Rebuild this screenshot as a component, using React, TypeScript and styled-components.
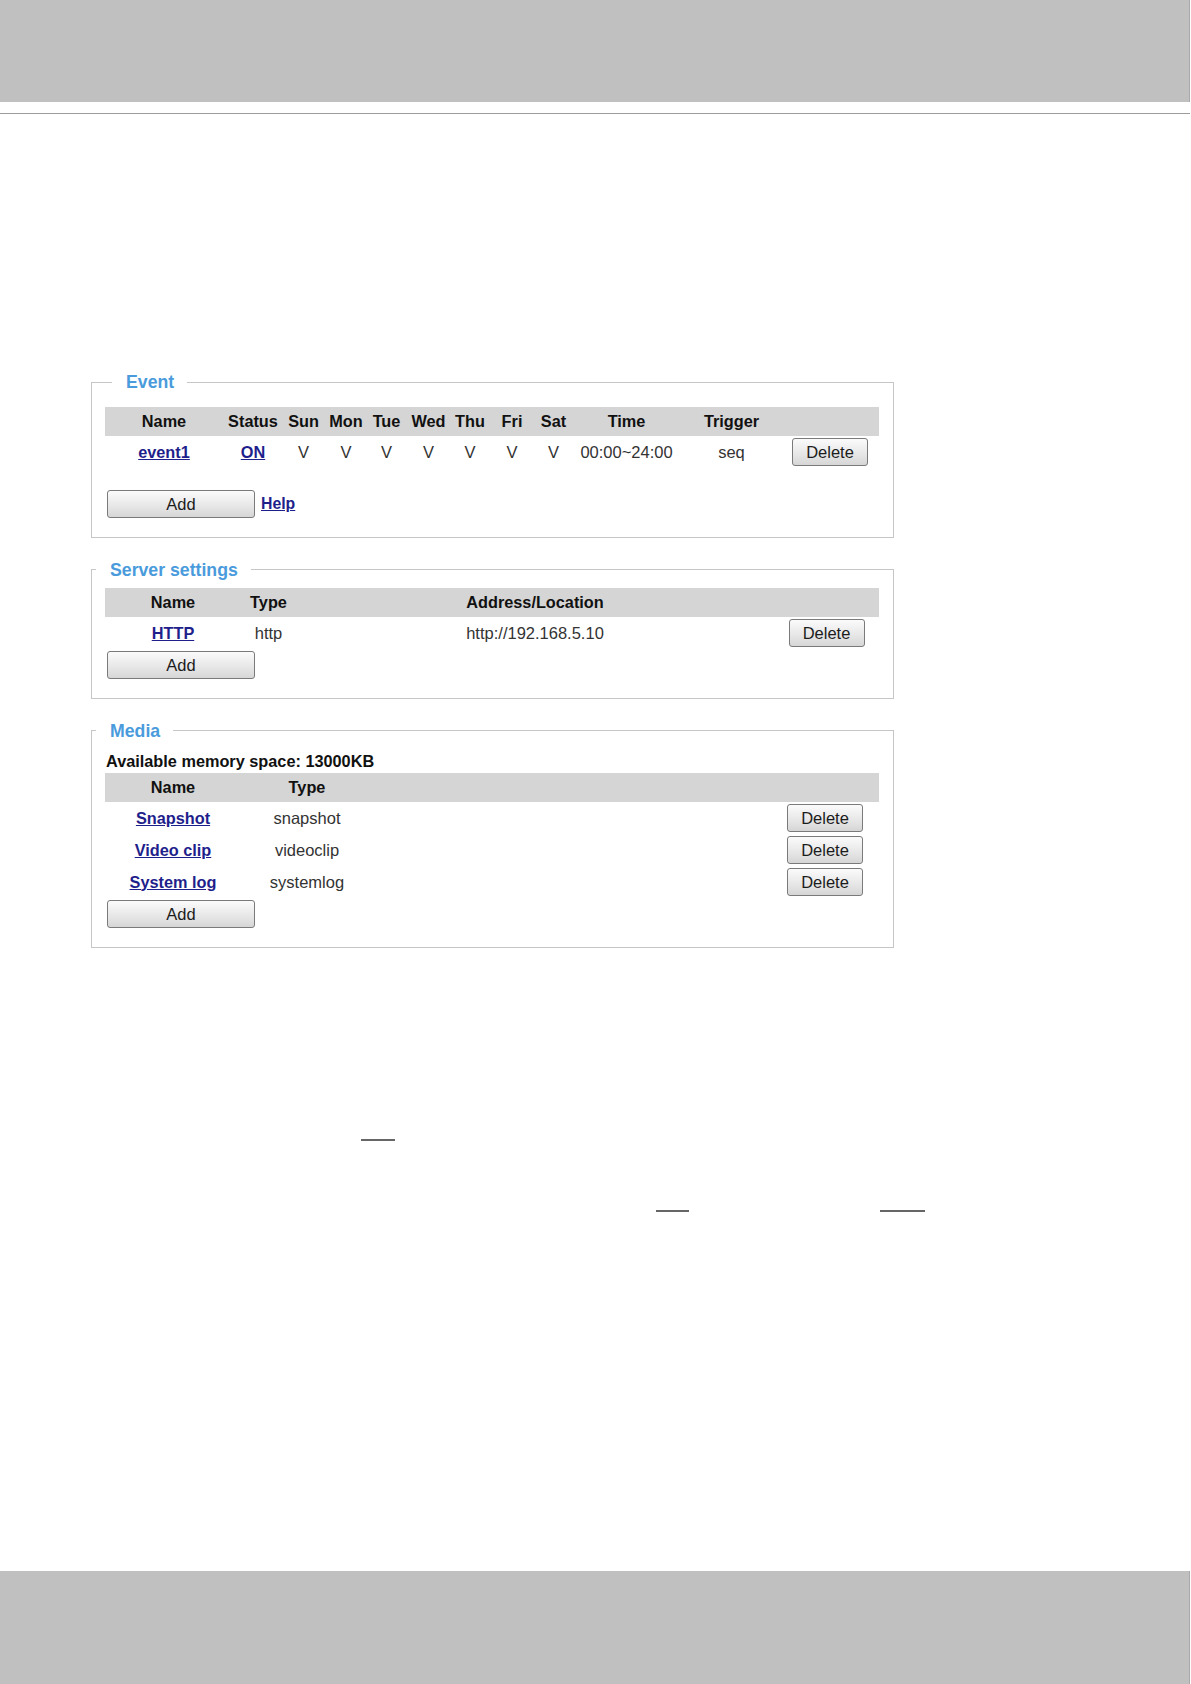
import styled, { createGlobalStyle } from "styled-components";

const GlobalStyle = createGlobalStyle`
  html, body {
    margin: 0;
    padding: 0;
    background: #fff;
  }
  body {
    font-family: "Liberation Sans", Arial, sans-serif;
  }
`;

const Page = styled.div`
  display: flex;
  flex-direction: column;
  min-height: 1684px;
  width: 1191px;
`;

const Band = styled.div`
  height: ${(p: { $h: number }) => p.$h}px;
  width: 1190px;
  box-sizing: border-box;
  background: #c0c0c0;
  border-right: 1px solid #a9a9a9;
  flex-shrink: 0;
`;

const Rule = styled.div`
  margin-top: 11px;
  height: 1px;
  width: 1190px;
  background: #9c9c9c;
`;

const Main = styled.main`
  flex: 1;
  padding-top: 258px;
`;

const Sections = styled.div`
  display: flex;
  flex-direction: column;
  gap: 22px;
  padding-left: 91px;
`;

const Fieldset = styled.fieldset`
  width: 803px;
  box-sizing: border-box;
  margin: 0;
  padding: 0;
  min-width: 0;
  border: 1px solid #c6c6c6;
`;

const Legend = styled.legend<{ $offset: number }>`
  margin-left: ${(p) => p.$offset}px;
  padding: 0 13px 0 14px;
  font-size: 17.7px;
  line-height: 20px;
  font-weight: bold;
  color: #4a9bdc;
`;

const Inner = styled.div<{ $top: number }>`
  padding: ${(p) => p.$top}px 14px 16.5px 13px;
`;

const Row = styled.div<{ $cols: string; $head?: boolean }>`
  display: grid;
  grid-template-columns: ${(p) => p.$cols};
  height: ${(p) => (p.$head ? 29 : 32)}px;
  align-items: center;
  background: ${(p) => (p.$head ? "#d5d5d5" : "transparent")};
`;

const HeadCell = styled.div`
  text-align: center;
  font-size: 16.3px;
  font-weight: bold;
  color: #111;
  white-space: nowrap;
`;

const Cell = styled.div`
  text-align: center;
  font-size: 16.5px;
  color: #333;
  white-space: nowrap;
`;

const LinkCell = styled.a`
  justify-self: center;
  font-size: 16.3px;
  font-weight: bold;
  color: #1f1f8c;
  text-decoration: underline;
  white-space: nowrap;
  cursor: pointer;
`;

const ButtonCell = styled.div`
  display: flex;
  justify-content: center;
`;

const Button = styled.button<{ $w: number }>`
  width: ${(p) => p.$w}px;
  height: 28px;
  padding: 0;
  border: 1px solid #7a7a7a;
  border-radius: 3px;
  background: linear-gradient(#fbfbfb, #e6e6e6 60%, #d6d6d6);
  font-family: "Liberation Sans", Arial, sans-serif;
  font-size: 16.5px;
  color: #1c1c1c;
  cursor: pointer;
`;

const Spacer = styled.div<{ $h: number }>`
  height: ${(p) => p.$h}px;
`;

const ActionRow = styled.div`
  display: flex;
  align-items: center;
  height: 32px;
  padding-left: 2px;
  gap: 6px;
`;

const Help = styled.a`
  font-size: 15.8px;
  font-weight: bold;
  color: #1f1f8c;
  text-decoration: underline;
  cursor: pointer;
`;

const Memo = styled.div`
  padding-left: 1px;
  font-size: 16.3px;
  line-height: 20px;
  font-weight: bold;
  color: #111;
  margin-bottom: 2px;
`;

const Notes = styled.div`
  display: flex;
  flex-direction: column;
  gap: 69px;
  margin-top: 191px;
`;

const NoteRow = styled.div`
  display: flex;
  height: 2px;
`;

const Blank = styled.span<{ $left: number; $w: number }>`
  margin-left: ${(p) => p.$left}px;
  width: ${(p) => p.$w}px;
  height: 2px;
  background: #666;
`;

const eventCols = "118px 60px 41px 44px 37px 47px 36px 48px 35px 111px 99px 98px";
const serverCols = "136px 55px 478px 105px";
const mediaCols = "136px 132px 398px 108px";

const days = ["Sun", "Mon", "Tue", "Wed", "Thu", "Fri", "Sat"];

const media = [
  { name: "Snapshot", type: "snapshot" },
  { name: "Video clip", type: "videoclip" },
  { name: "System log", type: "systemlog" },
];

export default function App() {
  return (
    <>
      <GlobalStyle />
      <Page>
        <Band $h={102} />
        <Rule />
        <Main>
          <Sections>
            <Fieldset>
              <Legend $offset={20}>Event</Legend>
              <Inner $top={15}>
                <Row $cols={eventCols} $head>
                  <HeadCell>Name</HeadCell>
                  <HeadCell>Status</HeadCell>
                  {days.map((d) => (
                    <HeadCell key={d}>{d}</HeadCell>
                  ))}
                  <HeadCell>Time</HeadCell>
                  <HeadCell>Trigger</HeadCell>
                  <div />
                </Row>
                <Row $cols={eventCols}>
                  <LinkCell>event1</LinkCell>
                  <LinkCell>ON</LinkCell>
                  {days.map((d) => (
                    <Cell key={d}>V</Cell>
                  ))}
                  <Cell>00:00~24:00</Cell>
                  <Cell>seq</Cell>
                  <ButtonCell>
                    <Button $w={76}>Delete</Button>
                  </ButtonCell>
                </Row>
                <Spacer $h={20} />
                <ActionRow>
                  <Button $w={148}>Add</Button>
                  <Help>Help</Help>
                </ActionRow>
              </Inner>
            </Fieldset>

            <Fieldset>
              <Legend $offset={4}>Server settings</Legend>
              <Inner $top={8.5}>
                <Row $cols={serverCols} $head>
                  <HeadCell>Name</HeadCell>
                  <HeadCell>Type</HeadCell>
                  <HeadCell>Address/Location</HeadCell>
                  <div />
                </Row>
                <Row $cols={serverCols}>
                  <LinkCell>HTTP</LinkCell>
                  <Cell>http</Cell>
                  <Cell>http://192.168.5.10</Cell>
                  <ButtonCell>
                    <Button $w={76}>Delete</Button>
                  </ButtonCell>
                </Row>
                <ActionRow>
                  <Button $w={148}>Add</Button>
                </ActionRow>
              </Inner>
            </Fieldset>

            <Fieldset>
              <Legend $offset={4}>Media</Legend>
              <Inner $top={10.5}>
                <Memo>Available memory space: 13000KB</Memo>
                <Row $cols={mediaCols} $head>
                  <HeadCell>Name</HeadCell>
                  <HeadCell>Type</HeadCell>
                  <div />
                  <div />
                </Row>
                {media.map((m) => (
                  <Row $cols={mediaCols} key={m.name}>
                    <LinkCell>{m.name}</LinkCell>
                    <Cell>{m.type}</Cell>
                    <div />
                    <ButtonCell>
                      <Button $w={76}>Delete</Button>
                    </ButtonCell>
                  </Row>
                ))}
                <ActionRow>
                  <Button $w={148}>Add</Button>
                </ActionRow>
              </Inner>
            </Fieldset>
          </Sections>

          <Notes>
            <NoteRow>
              <Blank $left={361} $w={34} />
            </NoteRow>
            <NoteRow>
              <Blank $left={656} $w={33} />
              <Blank $left={191} $w={45} />
            </NoteRow>
          </Notes>
        </Main>
        <Band $h={113} />
      </Page>
    </>
  );
}
